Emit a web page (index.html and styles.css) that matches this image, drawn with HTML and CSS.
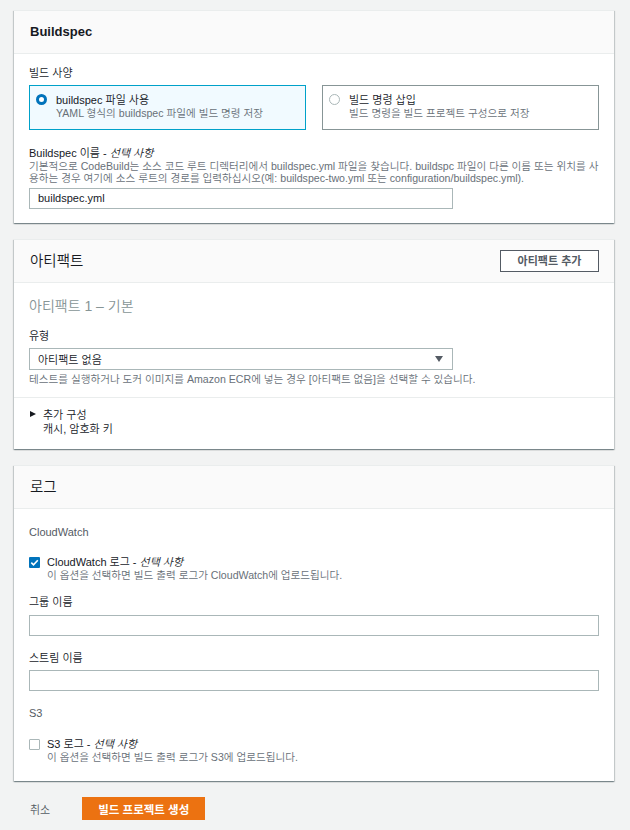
FILE: index.html
```html
<!DOCTYPE html>
<html lang="ko">
<head>
<meta charset="utf-8">
<title>Build project</title>
<link rel="stylesheet" href="styles.css">
</head>
<body>
<div class="page">

  <section class="panel">
    <header class="panel-header">
      <h2 class="panel-title latin">Buildspec</h2>
    </header>
    <div class="panel-body p1">
      <div class="label">빌드 사양</div>
      <div class="tiles">
        <div class="tile selected">
          <span class="radio on"></span>
          <div class="tile-text">
            <div class="tile-title">buildspec 파일 사용</div>
            <div class="desc">YAML 형식의 buildspec 파일에 빌드 명령 저장</div>
          </div>
        </div>
        <div class="tile">
          <span class="radio"></span>
          <div class="tile-text">
            <div class="tile-title">빌드 명령 삽입</div>
            <div class="desc">빌드 명령을 빌드 프로젝트 구성으로 저장</div>
          </div>
        </div>
      </div>
      <div class="field-gap">
        <div class="label">Buildspec 이름 - <i>선택 사항</i></div>
        <div class="desc">기본적으로 CodeBuild는 소스 코드 루트 디렉터리에서 buildspec.yml 파일을 찾습니다. buildspc 파일이 다른 이름 또는 위치를 사용하는 경우 여기에 소스 루트의 경로를 입력하십시오(예: buildspec-two.yml 또는 configuration/buildspec.yml).</div>
        <div class="input narrow">buildspec.yml</div>
      </div>
    </div>
  </section>

  <section class="panel">
    <header class="panel-header">
      <h2 class="panel-title">아티팩트</h2>
      <button class="btn-secondary">아티팩트 추가</button>
    </header>
    <div class="panel-body p2">
      <div class="subhead">아티팩트 1 – 기본</div>
      <div class="label type-label">유형</div>
      <div class="select narrow">
        <span>아티팩트 없음</span>
        <span class="arrow"></span>
      </div>
      <div class="desc helper">테스트를 실행하거나 도커 이미지를 Amazon ECR에 넣는 경우 [아티팩트 없음]을 선택할 수 있습니다.</div>
    </div>
    <div class="expander">
      <div class="exp-row">
        <span class="caret"></span>
        <div>
          <div class="label">추가 구성</div>
          <div class="label">캐시, 암호화 키</div>
        </div>
      </div>
    </div>
  </section>

  <section class="panel">
    <header class="panel-header">
      <h2 class="panel-title">로그</h2>
    </header>
    <div class="panel-body p3">
      <div class="label group-head">CloudWatch</div>
      <div class="check-row cw">
        <span class="checkbox on">
          <svg viewBox="0 0 11 11" width="11" height="11"><polyline points="2.3,5.6 4.5,7.8 8.8,3.2" fill="none" stroke="#fff" stroke-width="1.6"/></svg>
        </span>
        <div>
          <div class="label">CloudWatch 로그 - <i>선택 사항</i></div>
          <div class="desc">이 옵션을 선택하면 빌드 출력 로그가 CloudWatch에 업로드됩니다.</div>
        </div>
      </div>
      <div class="label f-group">그룹 이름</div>
      <div class="input wide"></div>
      <div class="label f-stream">스트림 이름</div>
      <div class="input wide"></div>
      <div class="label group-head s3">S3</div>
      <div class="check-row s3row">
        <span class="checkbox"></span>
        <div>
          <div class="label">S3 로그 - <i>선택 사항</i></div>
          <div class="desc">이 옵션을 선택하면 빌드 출력 로그가 S3에 업로드됩니다.</div>
        </div>
      </div>
    </div>
  </section>

  <footer class="actions">
    <span class="cancel">취소</span>
    <button class="btn-primary">빌드 프로젝트 생성</button>
  </footer>

</div>
</body>
</html>
```

FILE: styles.css
```css
* { box-sizing: border-box; }

body {
  margin: 0;
  background: #f2f3f3;
  font-family: "Liberation Sans Narrow", "Liberation Sans", "Noto Sans CJK KR", sans-serif;
  font-weight: 350;
  color: #16191f;
}

.page {
  padding: 10px 16px 0 14px;
}

.panel {
  background: #fff;
  border-top: 1px solid #eaeded;
  box-shadow: 0 1px 1px 0 rgba(0, 28, 36, 0.3), 1px 1px 1px 0 rgba(0, 28, 36, 0.15), -1px 1px 1px 0 rgba(0, 28, 36, 0.15);
  margin-bottom: 16px;
}

.panel-header {
  height: 43px;
  background: #fafafa;
  border-bottom: 1px solid #eaeded;
  display: flex;
  align-items: center;
  justify-content: space-between;
  padding: 0 15px 0 16px;
}

.panel-title {
  margin: 0;
  font-size: 14.5px;
  font-weight: 350;
  line-height: 18px;
}

.panel-title.latin {
  font-family: "Liberation Sans", "Noto Sans CJK KR", sans-serif;
  font-size: 13px;
  font-weight: 700;
}

.panel-body {
  padding: 0 15px;
}

.label {
  font-size: 11px;
  line-height: 14px;
}

.label i {
  font-style: italic;
}

.desc {
  font-size: 10.6px;
  line-height: 12px;
  color: #687078;
}

/* Buildspec panel */
.p1 {
  padding-top: 12px;
  padding-bottom: 14px;
}

.tiles {
  margin-top: 5px;
  display: grid;
  grid-template-columns: 277px 277px;
  gap: 16px;
}

.tile {
  border: 1px solid #879596;
  padding: 7px 10px 10px 6px;
  display: flex;
  gap: 9px;
  align-items: flex-start;
}

.tile.selected {
  border-color: #00a1c9;
  background: #f1faff;
}

.radio {
  width: 11px;
  height: 11px;
  border-radius: 50%;
  border: 1px solid #aab7b8;
  background: #fff;
  margin-top: 1px;
  flex: none;
}

.radio.on {
  border: 3.5px solid #0073bb;
}

.tile-title {
  font-size: 11px;
  line-height: 14px;
}

.field-gap {
  margin-top: 16px;
}

.input {
  height: 21px;
  border: 1px solid #aab7b8;
  background: #fff;
  font-family: "Liberation Sans", "Noto Sans CJK KR", sans-serif;
  font-size: 11px;
  line-height: 19px;
  padding: 0 8px;
}

.p1 .input {
  margin-top: 4px;
}

.narrow {
  width: 424px;
}

.wide {
  width: 570px;
}

/* Artifacts panel */
.btn-secondary {
  height: 22px;
  width: 99px;
  border: 1px solid #545b64;
  background: #fff;
  color: #545b64;
  font-family: inherit;
  font-size: 11px;
  font-weight: 700;
  padding: 0;
  line-height: 20px;
}

.p2 {
  padding-top: 14px;
  padding-bottom: 12px;
  border-bottom: 1px solid #eaeded;
}

.subhead {
  font-size: 14px;
  line-height: 18px;
  color: #879596;
}

.type-label {
  margin-top: 14px;
}

.select {
  margin-top: 5px;
  height: 22px;
  border: 1px solid #aab7b8;
  display: flex;
  align-items: center;
  justify-content: space-between;
  padding: 0 9px 0 8px;
  font-size: 11px;
}

.arrow {
  width: 0;
  height: 0;
  border-left: 4px solid transparent;
  border-right: 4px solid transparent;
  border-top: 6px solid #545b64;
}

.helper {
  margin-top: 3px;
}

.expander {
  padding: 10px 15px 13px;
}

.exp-row {
  display: flex;
  gap: 7px;
  align-items: flex-start;
}

.caret {
  width: 0;
  height: 0;
  margin-top: 3px;
  margin-left: 1px;
  border-top: 3.5px solid transparent;
  border-bottom: 3.5px solid transparent;
  border-left: 6px solid #16191f;
}

/* Logs panel */
.p3 {
  padding-top: 16px;
  padding-bottom: 18px;
}

.group-head {
  color: #545b64;
}

.check-row {
  display: flex;
  gap: 7px;
  align-items: flex-start;
}

.cw {
  margin-top: 16px;
}

.checkbox {
  width: 11px;
  height: 11px;
  flex: none;
  margin-top: 2px;
  border: 1px solid #aab7b8;
  border-radius: 1px;
  background: #fff;
  display: flex;
}

.checkbox.on {
  border: none;
  background: #0073bb;
}

.f-group {
  margin-top: 14px;
}

.f-group + .input {
  margin-top: 6px;
}

.f-stream {
  margin-top: 15px;
}

.f-stream + .input {
  margin-top: 5px;
}

.s3 {
  margin-top: 15px;
}

.s3row {
  margin-top: 17px;
}

/* Footer */
.actions {
  display: flex;
  align-items: center;
  gap: 32px;
  padding: 0 16px;
}

.cancel {
  font-size: 11px;
  color: #545b64;
}

.btn-primary {
  height: 23px;
  width: 123px;
  border: none;
  background: #ec7211;
  color: #fff;
  font-family: inherit;
  font-size: 11.5px;
  font-weight: 700;
  padding: 0;
}
```
